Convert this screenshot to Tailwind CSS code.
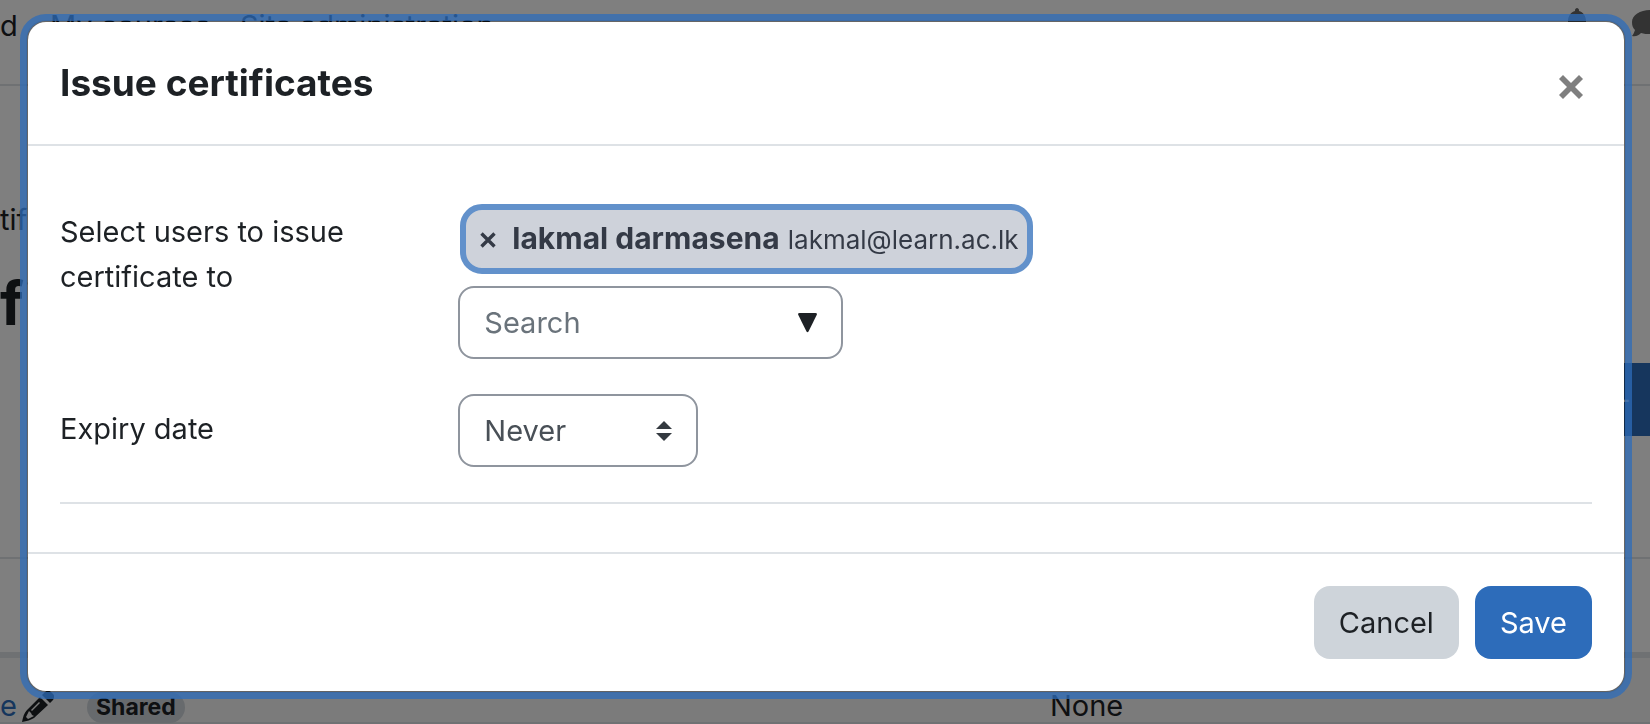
<!DOCTYPE html>
<html lang="en">
<head>
<meta charset="utf-8">
<title>Issue certificates</title>
<script src="https://cdn.jsdelivr.net/npm/@tailwindcss/browser@4"></script>
</head>
<body class="bg-white font-['Inter',sans-serif] text-[29px] leading-[45px] text-[#1d2125]">

<!-- Page behind the dialog -->
<div class="flex h-screen flex-col overflow-hidden" aria-hidden="true">
  <header class="flex h-[86px] shrink-0 items-start justify-between border-b-2 border-[#dee2e6] pt-[3px]">
    <nav class="flex">
      <a href="#" class="w-[50px]">d</a>
      <a href="#" class="w-[190px]">My courses</a>
      <a href="#">Site administration</a>
    </nav>
    <div class="flex pt-[5px] text-[#666]">
      <svg class="mr-11 h-[30px] w-[22px]" viewBox="0 0 22 30" fill="currentColor"><path d="M11 0c1 0 2 1 2 2v1c4 1 7 5 7 10v5l2 4v2H0v-2l2-4v-5C2 8 5 4 9 3V2c0-1 1-2 2-2zM8 26h6a3 3 0 0 1-6 0z"/></svg>
      <svg class="mt-[2px] h-7 w-[18px]" viewBox="0 0 18 28" fill="currentColor"><path d="M18 0C8 0 0 5 0 12c0 4 1 6 3 8-1 3-2 5-3 6 4 1 7-1 9-3 3 1 6 1 9 1z"/></svg>
    </div>
  </header>
  <p class="mt-[111px]">tifi</p>
  <h1 class="mt-[20px] text-[60px] leading-[82px] font-bold">fi</h1>
  <div class="mt-[19px] flex justify-end">
    <button type="button" class="h-[73px] w-[36px] bg-[#2d6cba] text-left text-white">–</button>
  </div>
  <div class="mt-[121px] h-[2px] shrink-0 bg-[#dee2e6]"></div>
  <div class="mt-[93px] h-[6px] shrink-0 bg-[#dee2e6]"></div>
  <div class="flex h-[66px] shrink-0 items-start border-b-2 border-[#dee2e6] bg-[#f7f7f7] pt-[25px]">
    <a href="#" class="w-[22px] text-[#2d6cba]">e</a>
    <svg class="mt-[7px] h-[32px] w-[32px]" viewBox="0 0 32 32" fill="currentColor"><path fill-rule="evenodd" d="M23 2c2-2 4-2 6 0l2 2c2 2 1 4 0 6l-3 3-8-8zM18 7l8 8-14 13c-3 2-7 3-12 4 1-5 2-9 5-12zM7 21l-3 6 2 2 6-3-2-1-1-2zM17 12l-8 8 1 1 8-8z"/></svg>
    <span class="mt-[9px] ml-[33px] rounded-full bg-[#ced4da] px-[9px] text-[23px] leading-[31px] font-bold">Shared</span>
    <span class="ml-auto w-[600px]">None</span>
  </div>
</div>

<div class="fixed inset-0 bg-black/50"></div>

<div class="fixed inset-0 pt-[20px] pr-[24px] pl-[26px]">
  <div role="dialog" aria-modal="true" aria-labelledby="dialog-title" class="rounded-[20px] border-2 border-black/20 bg-white bg-clip-padding outline-7 -outline-offset-1 outline-[#2d6cba]/75">
    <div class="flex h-[124px] items-center justify-between border-b-2 border-[#dee2e6] px-8">
      <h2 id="dialog-title" class="pb-[2px] text-[37px] leading-[45px] font-bold">Issue certificates</h2>
      <button type="button" aria-label="Close" class="px-[9px] pt-4 pb-2 text-[#7f7f7f]">
        <svg class="h-6 w-6" viewBox="0 0 24 24" fill="currentColor"><path d="M4 0l8 8 8-8 4 4-8 8 8 8-4 4-8-8-8 8-4-4 8-8-8-8z"/></svg>
      </button>
    </div>

    <form id="issue-form" class="px-8 pt-[58px] pb-12">
      <div class="flex">
        <label for="users" class="w-[26%] pt-[5px] pr-10">Select users to issue certificate to</label>
        <div class="min-w-0 flex-1">
          <div class="mx-[2px] mb-3 flex h-[70px] w-fit items-center rounded-[22px] border-[6px] border-[#6291cb] bg-[#ced2da] pr-2 pl-[14px] text-[#343a46]">
            <button type="button" aria-label="Remove lakmal darmasena" class="mr-4 pt-[2px]">
              <svg class="h-4 w-4" viewBox="0 0 16 16" fill="none" stroke="currentColor" stroke-width="3.400"><path d="M1.500 1.500l13 13M14.500 1.500l-13 13"/></svg>
            </button>
            <span><strong class="text-[30px] font-bold">lakmal darmasena</strong> <span class="text-[26px]">lakmal@learn.ac.lk</span></span>
          </div>
          <div class="flex h-[73px] w-[385px] items-center rounded-2xl border-2 border-[#8f959e] pr-6 pl-6">
            <input id="users" type="text" placeholder="Search" class="min-w-0 flex-1 outline-none placeholder:text-[#6a737b]">
            <button type="button" aria-label="Show users">
              <svg class="h-5 w-[19px]" viewBox="0 0 19 20" fill="currentColor"><path d="M1.500 0h16q2 0 1.200 2L10.500 18.500q-1 1.500-2 0L.300 2Q-.500 0 1.500 0z"/></svg>
            </button>
          </div>
        </div>
      </div>

      <div class="mt-[35px] flex">
        <label for="expiry" class="w-[26%] pt-3">Expiry date</label>
        <div class="relative h-[73px] w-[240px]">
          <select id="expiry" class="h-full w-full appearance-none rounded-2xl border-2 border-[#8f959e] bg-white pl-6 text-[#495057]">
            <option>Never</option>
          </select>
          <svg class="pointer-events-none absolute top-[27px] right-[26px] h-5 w-4" viewBox="0 0 16 20" fill="#343a40"><path d="M0 8l8-8 8 8zM0 12h16l-8 8z"/></svg>
        </div>
      </div>

      <hr class="mt-[35px] border-t-2 border-[#dee2e6]">
    </form>

    <div class="flex justify-end gap-4 border-t-2 border-[#dee2e6] p-8">
      <button type="button" class="h-[73px] rounded-2xl bg-[#ced4da] px-[25px]">Cancel</button>
      <button type="submit" form="issue-form" class="h-[73px] rounded-2xl bg-[#2d6cba] px-[25px] text-white">Save</button>
    </div>
  </div>
</div>
</body>
</html>
